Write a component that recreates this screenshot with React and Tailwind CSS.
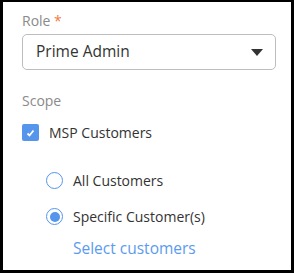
export default function App() {
  return (
    <div className="w-[294px] h-[273px] bg-white border-black border-t-2 border-l-[3px] border-r-[3px] border-b-[3px] pl-[19px] pr-[15px] pt-[9px]" style={{ fontFamily: '"Open Sans", sans-serif' }}>
      <label className="block text-[14px] leading-[20px] text-[#8a8a8a]">
        Role <span className="text-[#f5793b]">*</span>
      </label>
      <div className="mt-[3px] h-[36px] flex items-center justify-between rounded-[5px] border border-[#bdbdbd] pl-[13px] pr-[12px]">
        <span className="text-[15.5px] text-[#333]">Prime Admin</span>
        <svg width="12" height="7" viewBox="0 0 12 7"><path d="M0 0h12L6 7z" fill="#333" /></svg>
      </div>
      <div className="mt-[21px] text-[14px] leading-[20px] text-[#8a8a8a]">Scope</div>
      <div className="mt-[11px] flex items-center gap-[10px]">
        <span className="w-[17px] h-[17px] rounded-[2px] bg-[#5595ec] flex items-center justify-center">
          <svg width="9" height="8" viewBox="0 0 9 8"><path d="M1.5 4.5l2 2 4-5" stroke="#fff" strokeWidth="1.8" fill="none" /></svg>
        </span>
        <span className="text-[14px] text-[#333]">MSP Customers</span>
      </div>
      <div className="mt-[27px] pl-[24px] flex flex-col">
        <div className="flex items-center gap-[10px]">
          <span className="w-[17px] h-[17px] rounded-full border-[1.5px] border-[#5595ec]" />
          <span className="text-[14px] text-[#333]">All Customers</span>
        </div>
        <div className="mt-[15px] flex items-center gap-[10px]">
          <span className="w-[17px] h-[17px] rounded-full border-[1.5px] border-[#5595ec] flex items-center justify-center">
            <span className="w-[10px] h-[10px] rounded-full bg-[#5595ec]" />
          </span>
          <span className="text-[14px] text-[#333]">Specific Customer(s)</span>
        </div>
        <div className="mt-[10px] pl-[27px] text-[15.5px] text-[#5b9bef]">Select customers</div>
      </div>
    </div>
  );
}
